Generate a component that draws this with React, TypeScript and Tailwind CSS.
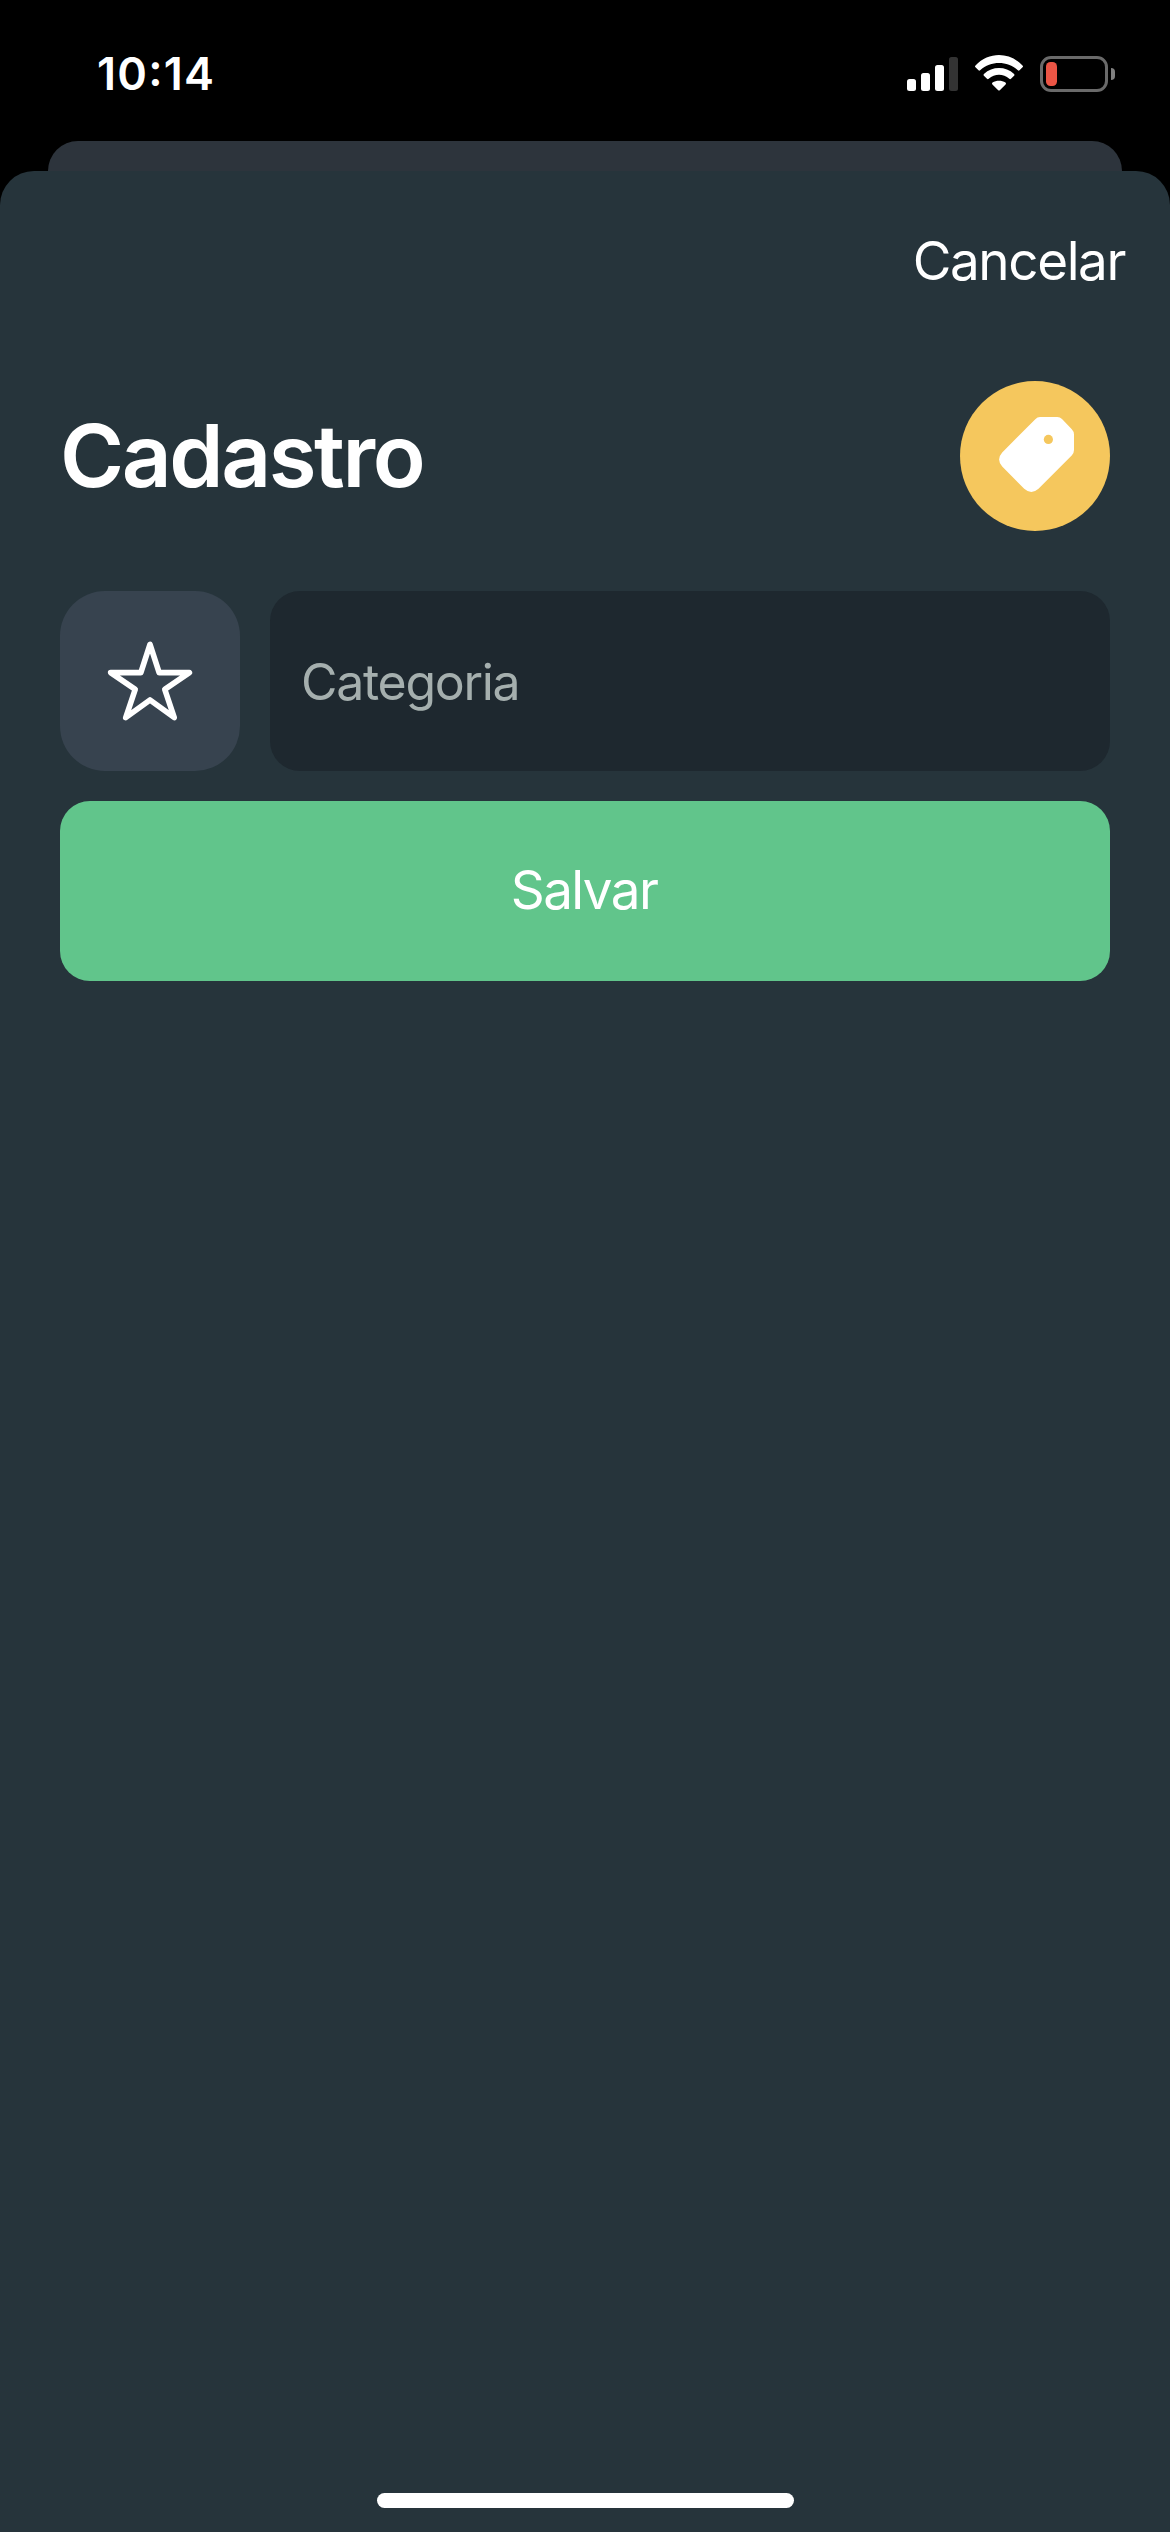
import React from "react";
import { IoStarOutline } from "react-icons/io5";

function StatusBar() {
  return (
    <header className="flex h-[141px] items-start justify-between pl-[97px] pr-[55px]">
      <span className="mt-[46px] text-[45px] leading-[56px] font-semibold tracking-[1.2px]">
        10<span className="relative -top-[4px]">:</span>14
      </span>
      <div className="mt-[55px] flex h-[37px] items-start">
        <div className="mt-[2px] flex h-[34px] items-end gap-[5px]">
          <span className="h-3 w-[9px] rounded-[2.5px] bg-white" />
          <span className="h-[18px] w-[9px] rounded-[2.5px] bg-white" />
          <span className="h-[26px] w-[9px] rounded-[2.5px] bg-white" />
          <span className="h-[34px] w-[9px] rounded-[2.5px] bg-[#333333]" />
        </div>
        <svg className="ml-[17px] h-[36px] w-[48px]" viewBox="0 0 48 36" fill="#fff">
          <path d="M0.5 10.4C14-3.4 34-3.4 47.5 10.4Q48.5 11.4 47.5 12.3L44.5 15.3Q43.7 16 42.9 15.3C32 5.6 16 5.6 5.1 15.3Q4.3 16 3.5 15.3L0.5 12.3Q-0.5 11.4 0.5 10.4Z" />
          <path d="M8.9 18.9C17.5 11 30.5 11 39.1 18.9Q40 19.8 39.1 20.7L36 23.8Q35.2 24.6 34.3 23.8C28.3 18.4 19.7 18.4 13.7 23.8Q12.8 24.6 12 23.8L8.9 20.7Q8 19.8 8.9 18.9Z" />
          <path d="M17.5 27.6C21.3 25 26.7 25 30.5 27.6Q31.5 28.5 30.6 29.4L24.8 35.2Q24 36 23.2 35.2L17.4 29.4Q16.5 28.5 17.5 27.6Z" />
        </svg>
        <div className="mt-[1px] ml-[17px] flex items-center gap-[3px]">
          <div className="h-[36px] w-[68px] rounded-[11px] border-3 border-[#6a6a6a] p-[3px]">
            <div className="h-6 w-[11px] rounded-[4.5px] bg-[#eb5545]" />
          </div>
          <span className="h-3 w-[4px] rounded-r-full bg-[#808080]" />
        </div>
      </div>
    </header>
  );
}

function TagBadge() {
  return (
    <div className="size-[150px] rounded-full bg-[#f5c75d]">
      <svg className="size-[150px]" viewBox="0 0 150 150">
        <path
          fill="#fff"
          d="M80 36H97.3Q100 36 102 38.1L111.8 48.2Q114 50.4 114 53.5V69Q114 72.2 111.7 74.5L78.5 107.8Q71.3 114.2 64.2 107.8L42.2 85.5Q36 78.4 42.2 71.5L75.3 38.2Q77.4 36 80 36Z"
        />
        <circle cx="88.4" cy="58.4" r="4.6" fill="#f5c75d" />
      </svg>
    </div>
  );
}

export default function App() {
  return (
    <div className="flex h-[2532px] w-[1170px] flex-col bg-black font-['Inter',sans-serif] text-white">
      <StatusBar />
      <div className="mx-[48px] h-[30px] rounded-t-[30px] bg-[#2d343c]" />
      <main className="flex flex-1 flex-col rounded-t-[34px] bg-[#26343b]">
        <div className="flex h-[180px] justify-end pr-[45px]">
          <button className="h-[180px] text-[53px] leading-[180px] tracking-[-1.4px]">Cancelar</button>
        </div>
        <div className="mt-[30px] flex h-[150px] items-center justify-between px-[60px]">
          <h1 className="text-[87px] leading-[106px] font-semibold tracking-[-2.4px]">Cadastro</h1>
          <TagBadge />
        </div>
        <form className="mt-[60px] flex flex-col gap-[30px] px-[60px]">
          <div className="flex gap-[30px]">
            <button
              type="button"
              className="flex size-[180px] items-center justify-center rounded-[45px] bg-[#37434f]"
            >
              <IoStarOutline className="size-[90px]" />
            </button>
            <input
              className="h-[180px] min-w-0 flex-1 rounded-[30px] bg-[#1e282f] px-[31px] pt-[2px] text-[50px] tracking-[-1.3px] placeholder:text-[#a5afae]"
              placeholder="Categoria"
            />
          </div>
          <button
            type="button"
            className="h-[180px] rounded-[30px] bg-[#61c58b] pr-[2px] text-[53px] tracking-[-1.6px]"
          >
            Salvar
          </button>
        </form>
        <div className="mx-auto mt-auto mb-[24px] h-[15px] w-[417px] rounded-full bg-white" />
      </main>
    </div>
  );
}
